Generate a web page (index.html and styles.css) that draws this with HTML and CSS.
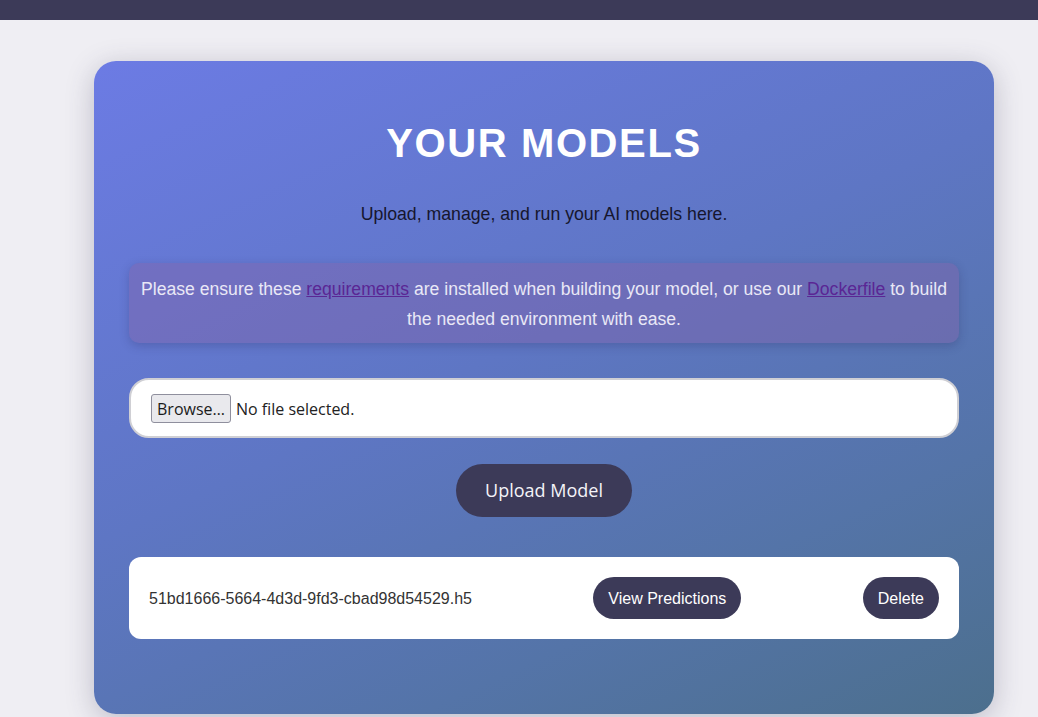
FILE: index.html
```html
<!DOCTYPE html>
<html lang="en">
<head>
<meta charset="utf-8">
<title>Your Models</title>
<link rel="stylesheet" href="styles.css">
</head>
<body>
<header class="topbar"></header>
<main class="page">
  <section class="card">
    <h1 class="title">YOUR MODELS</h1>
    <p class="subtitle">Upload, manage, and run your AI models here.</p>
    <div class="notice">
      Please ensure these <a href="#req" class="link">requirements</a> are installed when building your model, or use our <a href="#docker" class="link">Dockerfile</a> to build the needed environment with ease.
    </div>
    <div class="file-box">
      <span class="browse">Browse…</span>
      <span class="file-label">No file selected.</span>
    </div>
    <div class="upload-row">
      <button class="upload-btn">Upload Model</button>
    </div>
    <ul class="model-list">
      <li class="model-item">
        <span class="model-name">51bd1666-5664-4d3d-9fd3-cbad98d54529.h5</span>
        <button class="pill-btn">View Predictions</button>
        <button class="pill-btn">Delete</button>
      </li>
    </ul>
  </section>
</main>
</body>
</html>
```

FILE: styles.css
```css
* { box-sizing: border-box; }
html, body { margin: 0; padding: 0; }
body {
  background: #efeef3;
  font-family: "Liberation Sans", Arial, sans-serif;
  height: 717px;
  overflow: hidden;
}
.topbar {
  height: 20px;
  background: #3c3a58;
}
.page {
  padding: 41px 44px 0 94px;
}
.card {
  width: 900px;
  height: 653px;
  border-radius: 22px;
  background: linear-gradient(155deg, #6c7be4 0%, #5e76c4 45%, #5474a8 75%, #4c6f8d 100%);
  box-shadow: 0 6px 28px rgba(60, 58, 88, 0.28);
  padding: 57px 35px 0;
}
.title {
  margin: 0;
  text-align: center;
  color: #ffffff;
  font-size: 40px;
  line-height: 50px;
  letter-spacing: 1.6px;
  font-weight: 700;
}
.subtitle {
  margin: 34px 0 0;
  text-align: center;
  color: #16162e;
  font-size: 17.7px;
  line-height: 24px;
}
.notice {
  margin-top: 37px;
  padding: 11px 7px 9px;
  border-radius: 10px;
  background: rgba(128, 100, 170, 0.45);
  box-shadow: 0 3px 10px rgba(40, 40, 90, 0.25);
  color: #e9e8f6;
  font-size: 17.6px;
  line-height: 30px;
  text-align: center;
}
.link {
  color: #5a2694;
  text-decoration: underline;
}
.file-box {
  margin-top: 35px;
  height: 60px;
  background: #ffffff;
  border: 2px solid #cfcfd4;
  border-radius: 20px;
  display: flex;
  align-items: center;
  padding: 1px 20px 0;
  gap: 5px;
  font-family: "Open Sans", "Noto Sans", sans-serif;
  font-size: 16px;
  color: #222;
}
.browse {
  display: inline-flex;
  align-items: center;
  height: 29px;
  padding: 0 5px;
  background: #e9e9ed;
  border: 1px solid #8f8f9d;
  border-radius: 3px;
  color: #1b1b1b;
}
.upload-row {
  display: flex;
  justify-content: center;
  margin-top: 26px;
}
.upload-btn {
  width: 176px;
  height: 53px;
  border: none;
  border-radius: 27px;
  background: #3c3a58;
  color: #f4f4f8;
  font-family: "Open Sans", "Noto Sans", sans-serif;
  font-size: 18px;
  padding: 0 0 1px;
}
.model-list {
  list-style: none;
  margin: 40px 0 0;
  padding: 0;
}
.model-item {
  height: 82px;
  background: #ffffff;
  border-radius: 12px;
  display: flex;
  align-items: center;
  justify-content: space-between;
  padding: 0 20px;
}
.model-name {
  color: #333333;
  font-size: 16px;
  padding-top: 2px;
}
.pill-btn {
  height: 42px;
  border: none;
  border-radius: 21px;
  background: #3c3a58;
  color: #ffffff;
  font-family: "Liberation Sans", Arial, sans-serif;
  font-size: 16px;
  padding: 2px 15px 0;
}
```
